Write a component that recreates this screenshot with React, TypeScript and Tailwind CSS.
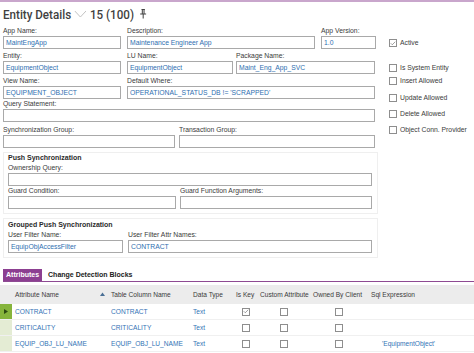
import { Check } from 'lucide-react';

const Field = ({ label, value, className = '' }: { label: string; value?: string; className?: string }) => (
  <div className={`flex flex-col ${className}`}>
    <div className="h-[10px] leading-[10px] text-[6.8px] text-[#3b3b3b] whitespace-nowrap">{label}</div>
    <div className="h-[13px] border border-[#a9a9a9] bg-white px-[2px] leading-[11px] text-[6.8px] text-[#2f6fb0] whitespace-nowrap overflow-hidden">
      {value}
    </div>
  </div>
);

const Box = ({ checked = false }: { checked?: boolean }) => (
  <div className="w-[8px] h-[8px] border border-[#8e8e8e] bg-white flex items-center justify-center shrink-0">
    {checked && <Check size={7} strokeWidth={2} color="#444" />}
  </div>
);

const CheckRow = ({ label, checked = false, className = '' }: { label: string; checked?: boolean; className?: string }) => (
  <div className={`flex items-center gap-[3px] h-[10px] ${className}`}>
    <Box checked={checked} />
    <span className="text-[6.8px] text-[#3b3b3b] whitespace-nowrap">{label}</span>
  </div>
);

const rows = [
  { attr: 'CONTRACT', col: 'CONTRACT', type: 'Text', key: true, sql: '' },
  { attr: 'CRITICALITY', col: 'CRITICALITY', type: 'Text', key: false, sql: '' },
  { attr: 'EQUIP_OBJ_LU_NAME', col: 'EQUIP_OBJ_LU_NAME', type: 'Text', key: false, sql: "'EquipmentObject'" },
];

const cols = 'grid grid-cols-[12px_96px_82px_44px_24px_52px_58px_1fr]';

export default function App() {
  return (
    <div className="w-[474px] h-[353px] bg-white overflow-hidden font-['Liberation_Sans',Arial,sans-serif] text-[#3b3b3b]">
      <div className="h-[2px] bg-[#c9a6cc]" />

      {/* Title */}
      <div className="h-[24px] flex items-center pl-[3px] font-['Roboto',sans-serif] font-medium text-[13.5px] text-[#3f3f3f]">
        <div className="flex items-center gap-[4px] origin-left scale-x-[0.86] whitespace-nowrap">
          <span>Entity Details</span>
          <svg width="14" height="8" viewBox="0 0 14 8">
            <polyline points="0.5,1 7,7 13.5,1" fill="none" stroke="#bdbdbd" strokeWidth="1" />
          </svg>
          <span>15 (100)</span>
          <svg width="8" height="10" viewBox="0 0 8 10" className="ml-[3px]">
            <path d="M2 0.5h4M3 0.5v4M5 0.5v4M0.5 5h7M4 5v4.5" stroke="#444" strokeWidth="1.2" fill="none" />
          </svg>
        </div>
      </div>

      <div className="flex">
        {/* Form */}
        <div className="w-[378px] pl-[3px]">
          <div className="flex gap-[6px] mb-[2px]">
            <Field label="App Name:" value="MaintEngApp" className="w-[118px]" />
            <Field label="Description:" value="Maintenance Engineer App" className="w-[188px]" />
            <Field label="App Version:" value="1.0" className="w-[55px]" />
          </div>
          <div className="flex gap-[6px] mb-[2px]">
            <Field label="Entity:" value="EquipmentObject" className="w-[118px]" />
            <Field label="LU Name:" value="EquipmentObject" className="w-[106px]" />
            <Field label="Package Name:" value="Maint_Eng_App_SVC" className="w-[139px] -ml-[3px]" />
          </div>
          <div className="flex gap-[6px]">
            <Field label="View Name:" value="EQUIPMENT_OBJECT" className="w-[118px]" />
            <Field label="Default Where:" value="OPERATIONAL_STATUS_DB != 'SCRAPPED'" className="w-[248px]" />
          </div>
          <Field label="Query Statement:" className="w-[372px] mb-[3px]" />
          <div className="flex gap-[4px]">
            <Field label="Synchronization Group:" className="w-[172px]" />
            <Field label="Transaction Group:" className="w-[196px]" />
          </div>

          {/* Push Synchronization */}
          <div className="mt-[4px] border border-[#efefef] pl-[4px] pb-[4px] w-[375px]">
            <div className="h-[10px] leading-[10px] text-[7px] font-bold text-[#2b2b2b]">Push Synchronization</div>
            <Field label="Ownership Query:" className="w-[364px]" />
            <div className="flex gap-[4px]">
              <Field label="Guard Condition:" className="w-[168px]" />
              <Field label="Guard Function Arguments:" className="w-[192px]" />
            </div>
          </div>

          {/* Grouped Push Synchronization */}
          <div className="mt-[4px] border border-[#efefef] pl-[4px] pt-[1px] pb-[4px] w-[375px]">
            <div className="h-[10px] leading-[10px] text-[7px] font-bold text-[#2b2b2b]">Grouped Push Synchronization</div>
            <div className="flex gap-[5px]">
              <Field label="User Filter Name:" value="EquipObjAccessFilter" className="w-[115px]" />
              <Field label="User Filter Attr Names:" value="CONTRACT" className="w-[244px]" />
            </div>
          </div>
        </div>

        {/* Right checkboxes */}
        <div className="pl-[11px]">
          <CheckRow label="Active" checked className="mt-[12px]" />
          <CheckRow label="Is System Entity" className="mt-[15px]" />
          <CheckRow label="Insert Allowed" className="mt-[3px]" />
          <CheckRow label="Update Allowed" className="mt-[7px]" />
          <CheckRow label="Delete Allowed" className="mt-[6px]" />
          <CheckRow label="Object Conn. Provider" className="mt-[6px]" />
        </div>
      </div>

      {/* Tabs */}
      <div className="mt-[11px] ml-[3px] flex items-end border-b-[1.5px] border-[#8e4a93]">
        <div className="h-[12px] px-[3px] bg-[#8c3f91] text-white text-[7px] font-bold leading-[12px]">Attributes</div>
        <div className="h-[12px] px-[6px] text-[#222] text-[7px] font-bold leading-[12px]">Change Detection Blocks</div>
      </div>

      {/* Table */}
      <div className="mt-[3px] text-[6.6px]">
        <div className={`${cols} h-[19px] items-center bg-[#ececec] text-[#3b3b3b]`}>
          <div />
          <div className="pl-[3px] flex items-center justify-between pr-[3px]">
            <span>Attribute Name</span>
            <svg width="5" height="4" viewBox="0 0 5 4"><polygon points="0,4 2.5,0.5 5,4" fill="#4a6f95" /></svg>
          </div>
          <div className="pl-[3px]">Table Column Name</div>
          <div className="pl-[3px]">Data Type</div>
          <div className="whitespace-nowrap pl-[2px]">Is Key</div>
          <div className="whitespace-nowrap pl-[2px]">Custom Attribute</div>
          <div className="whitespace-nowrap pl-[3px]">Owned By Client</div>
          <div className="whitespace-nowrap pl-[3px]">Sql Expression</div>
        </div>
        {rows.map((r, i) => (
          <div key={r.attr} className={`${cols} h-[16px] items-center border-b border-[#f0f0f0] text-[#3273b5]`}>
            <div className={`h-full flex items-center justify-center ${i === 0 ? 'bg-[#86b43c]' : 'bg-[#e4ecd4]'}`}>
              {i === 0 && (
                <svg width="4" height="5" viewBox="0 0 4 5"><polygon points="0,0 4,2.5 0,5" fill="#2d4a12" /></svg>
              )}
            </div>
            <div className="pl-[3px] whitespace-nowrap">{r.attr}</div>
            <div className="pl-[3px] whitespace-nowrap">{r.col}</div>
            <div className="pl-[3px]">{r.type}</div>
            <div className="flex justify-center"><Box checked={r.key} /></div>
            <div className="flex justify-center"><Box /></div>
            <div className="flex justify-center"><Box /></div>
            <div className="pl-[14px] whitespace-nowrap">{r.sql}</div>
          </div>
        ))}
      </div>
    </div>
  );
}
